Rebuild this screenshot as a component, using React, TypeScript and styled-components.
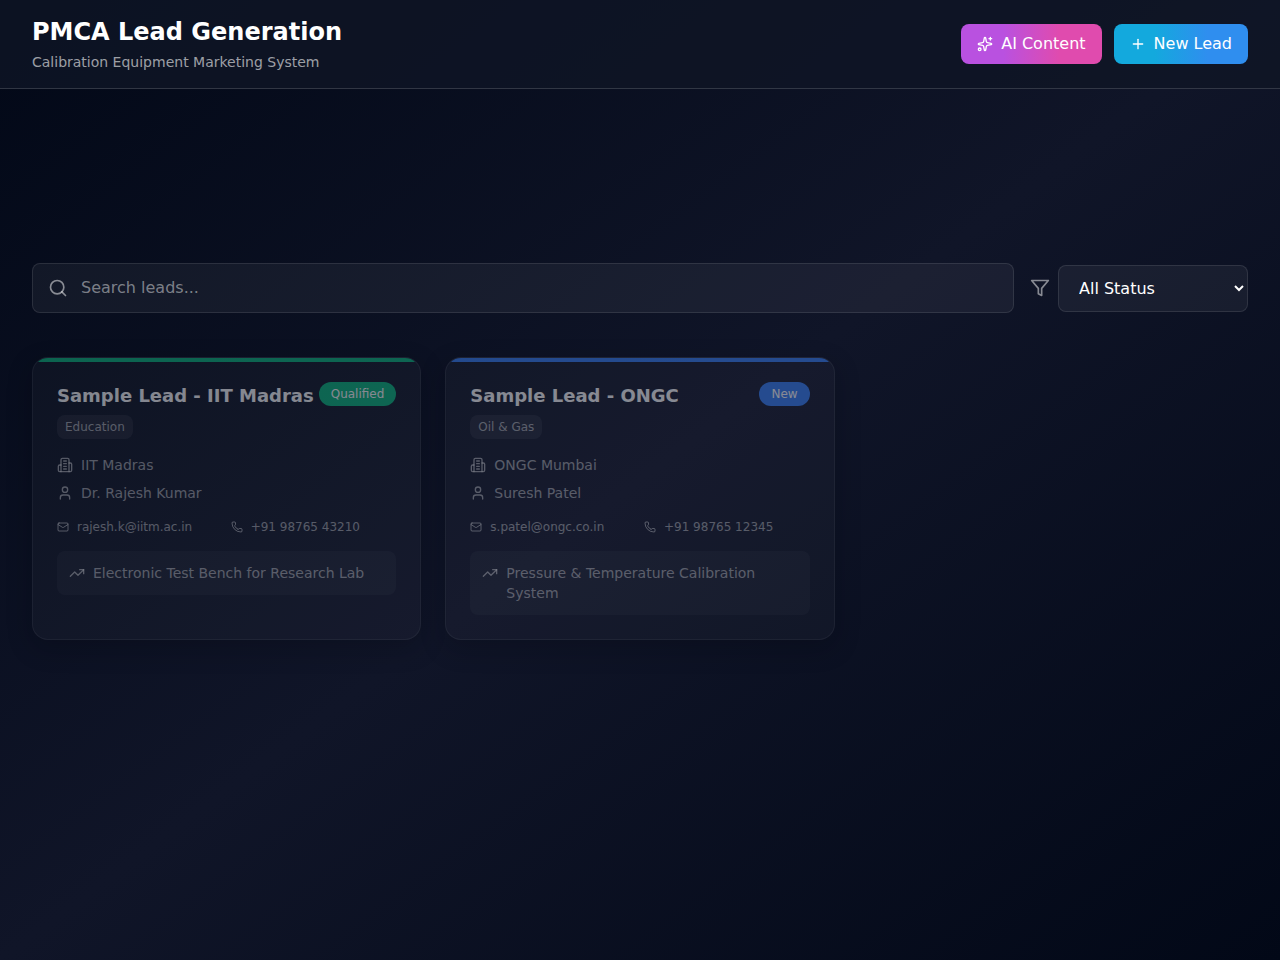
import React from "react";
import styled, { createGlobalStyle } from "styled-components";
import { Mail, Phone, Plus, Search, TrendingUp, User } from "lucide-react";

const GlobalStyle = createGlobalStyle`
  *, *::before, *::after { box-sizing: border-box; }
  body {
    margin: 0;
    background: #020817;
    color: #ffffff;
    font-family: "DejaVu Sans", sans-serif;
    font-size: 16px;
    line-height: 24px;
  }
  h1, h2, p { margin: 0; }
  button, input, select { font: inherit; color: inherit; }
`;

const Page = styled.div`
  min-height: 100vh;
  background: linear-gradient(to bottom right, #020817, #101528, #020817);
`;

const Header = styled.header`
  display: flex;
  align-items: center;
  justify-content: space-between;
  padding: 16px 32px;
  background: rgba(15, 21, 38, 0.8);
  border-bottom: 1px solid rgba(255, 255, 255, 0.15);
`;

const PageTitle = styled.h1`
  font-size: 24px;
  line-height: 32px;
  font-weight: 700;
`;

const Subtitle = styled.p`
  margin-top: 4px;
  font-size: 14px;
  line-height: 20px;
  color: rgba(255, 255, 255, 0.6);
`;

const Actions = styled.div`
  display: flex;
  gap: 12px;
`;

const ActionButton = styled.button<{ $from: string; $to: string }>`
  display: flex;
  align-items: center;
  gap: 8px;
  padding: 8px 16px;
  border: 0;
  border-radius: 8px;
  background: linear-gradient(to right, ${(p) => p.$from} 30%, ${(p) => p.$to} 70%);
`;

const Main = styled.main`
  padding: 174px 32px 32px;
`;

const Filters = styled.div`
  display: flex;
  align-items: center;
  gap: 16px;
`;

const SearchField = styled.label`
  flex: 1;
  display: flex;
  align-items: center;
  gap: 13px;
  padding: 12px 15px;
  border: 1px solid rgba(255, 255, 255, 0.1);
  border-radius: 8px;
  background: rgba(255, 255, 255, 0.05);
  color: rgba(255, 255, 255, 0.5);
`;

const SearchInput = styled.input`
  flex: 1;
  min-width: 0;
  height: 24px;
  padding: 0;
  border: 0;
  outline: 0;
  background: transparent;
  color: #ffffff;

  &::placeholder { color: rgba(255, 255, 255, 0.45); }
`;

const StatusField = styled.label`
  display: flex;
  align-items: center;
  gap: 8px;
  color: rgba(255, 255, 255, 0.5);
`;

const StatusSelect = styled.select`
  width: 190px;
  height: 47px;
  padding: 12px 16px;
  border: 1px solid rgba(255, 255, 255, 0.1);
  border-radius: 8px;
  background: rgba(255, 255, 255, 0.05);
  color: #ffffff;

  option { background: #0f172a; }
`;

const Grid = styled.div`
  display: grid;
  grid-template-columns: repeat(3, 1fr);
  gap: 24px;
  margin-top: 44px;
`;

const Card = styled.article<{ $accent: string }>`
  position: relative;
  overflow: hidden;
  padding: 24px;
  border: 1px solid rgba(255, 255, 255, 0.1);
  border-radius: 16px;
  background: rgba(255, 255, 255, 0.05);
  box-shadow: 0 8px 24px rgba(0, 0, 0, 0.3);
  opacity: 0.5;

  &::before {
    content: "";
    position: absolute;
    inset: 0 0 auto;
    height: 4px;
    background: ${(p) => p.$accent};
  }
`;

const CardHead = styled.div`
  display: flex;
  align-items: flex-start;
  justify-content: space-between;
`;

const CardTitle = styled.h2`
  font-size: 18px;
  line-height: 28px;
  font-weight: 600;
`;

const Badge = styled.span<{ $color: string }>`
  padding: 4px 12px;
  border-radius: 12px;
  font-size: 12px;
  line-height: 16px;
  background: ${(p) => p.$color};
`;

const Tag = styled.p`
  width: fit-content;
  margin-top: 5px;
  padding: 4px 8px;
  border-radius: 8px;
  font-size: 12px;
  line-height: 16px;
  color: rgba(255, 255, 255, 0.6);
  background: rgba(255, 255, 255, 0.08);
`;

const Details = styled.div`
  display: grid;
  gap: 8px;
  margin: 16px 0;
`;

const Detail = styled.div`
  display: flex;
  align-items: center;
  gap: 8px;
  font-size: 14px;
  line-height: 20px;
  color: rgba(255, 255, 255, 0.6);
`;

const Contacts = styled.div`
  display: grid;
  grid-template-columns: 1fr 1fr;
  gap: 8px;
  margin-bottom: 16px;
`;

const Contact = styled.div`
  display: flex;
  align-items: center;
  gap: 8px;
  font-size: 12px;
  line-height: 16px;
  color: rgba(255, 255, 255, 0.6);
`;

const Interest = styled.div`
  display: flex;
  gap: 8px;
  padding: 12px;
  border-radius: 8px;
  font-size: 14px;
  line-height: 20px;
  color: rgba(255, 255, 255, 0.6);
  background: rgba(255, 255, 255, 0.05);

  svg { flex: none; margin-top: 2px; }
`;

const Glyph = ({ size, children }: { size: number; children: React.ReactNode }) => (
  <svg
    width={size}
    height={size}
    viewBox="0 0 24 24"
    fill="none"
    stroke="currentColor"
    strokeWidth="2"
    strokeLinecap="round"
    strokeLinejoin="round"
    aria-hidden="true"
  >
    {children}
  </svg>
);

const BuildingIcon = () => (
  <Glyph size={16}>
    <path d="M6 22V4a2 2 0 0 1 2-2h8a2 2 0 0 1 2 2v18Z" />
    <path d="M6 12H4a2 2 0 0 0-2 2v6a2 2 0 0 0 2 2h2" />
    <path d="M18 9h2a2 2 0 0 1 2 2v9a2 2 0 0 1-2 2h-2" />
    <path d="M10 6h4M10 10h4M10 14h4M10 18h4" />
  </Glyph>
);

const FilterIcon = () => (
  <Glyph size={20}>
    <polygon points="22 3 2 3 10 12.46 10 19 14 21 14 12.46 22 3" />
  </Glyph>
);

const SparklesIcon = () => (
  <Glyph size={16}>
    <path d="M11.017 2.814a1 1 0 0 1 1.966 0l1.051 5.558a2 2 0 0 0 1.594 1.594l5.558 1.051a1 1 0 0 1 0 1.966l-5.558 1.051a2 2 0 0 0-1.594 1.594l-1.051 5.558a1 1 0 0 1-1.966 0l-1.051-5.558a2 2 0 0 0-1.594-1.594l-5.558-1.051a1 1 0 0 1 0-1.966l5.558-1.051a2 2 0 0 0 1.594-1.594z" />
    <path d="M20 2v4M22 4h-4" />
    <circle cx="4" cy="20" r="2" />
  </Glyph>
);

const leads = [
  {
    title: "Sample Lead - IIT Madras",
    status: "Qualified",
    color: "#10b981",
    industry: "Education",
    company: "IIT Madras",
    person: "Dr. Rajesh Kumar",
    email: "rajesh.k@iitm.ac.in",
    phone: "+91 98765 43210",
    interest: "Electronic Test Bench for Research Lab",
  },
  {
    title: "Sample Lead - ONGC",
    status: "New",
    color: "#3b82f6",
    industry: "Oil & Gas",
    company: "ONGC Mumbai",
    person: "Suresh Patel",
    email: "s.patel@ongc.co.in",
    phone: "+91 98765 12345",
    interest: "Pressure & Temperature Calibration System",
  },
];

export default function App() {
  return (
    <Page>
      <GlobalStyle />
      <Header>
        <div>
          <PageTitle>PMCA Lead Generation</PageTitle>
          <Subtitle>Calibration Equipment Marketing System</Subtitle>
        </div>
        <Actions>
          <ActionButton type="button" $from="#b951e0" $to="#e04bae">
            <SparklesIcon />
            AI Content
          </ActionButton>
          <ActionButton type="button" $from="#13a9dd" $to="#2f8eef">
            <Plus size={16} />
            New Lead
          </ActionButton>
        </Actions>
      </Header>
      <Main>
        <Filters>
          <SearchField>
            <Search size={20} />
            <SearchInput type="text" placeholder="Search leads..." aria-label="Search leads" />
          </SearchField>
          <StatusField>
            <FilterIcon />
            <StatusSelect aria-label="Status" defaultValue="all">
              <option value="all">All Status</option>
              <option value="new">New</option>
              <option value="qualified">Qualified</option>
            </StatusSelect>
          </StatusField>
        </Filters>
        <Grid>
          {leads.map((lead) => (
            <Card key={lead.title} $accent={lead.color}>
              <CardHead>
                <CardTitle>{lead.title}</CardTitle>
                <Badge $color={lead.color}>{lead.status}</Badge>
              </CardHead>
              <Tag>{lead.industry}</Tag>
              <Details>
                <Detail>
                  <BuildingIcon />
                  {lead.company}
                </Detail>
                <Detail>
                  <User size={16} />
                  {lead.person}
                </Detail>
              </Details>
              <Contacts>
                <Contact>
                  <Mail size={12} />
                  {lead.email}
                </Contact>
                <Contact>
                  <Phone size={12} />
                  {lead.phone}
                </Contact>
              </Contacts>
              <Interest>
                <TrendingUp size={16} />
                {lead.interest}
              </Interest>
            </Card>
          ))}
        </Grid>
      </Main>
    </Page>
  );
}
